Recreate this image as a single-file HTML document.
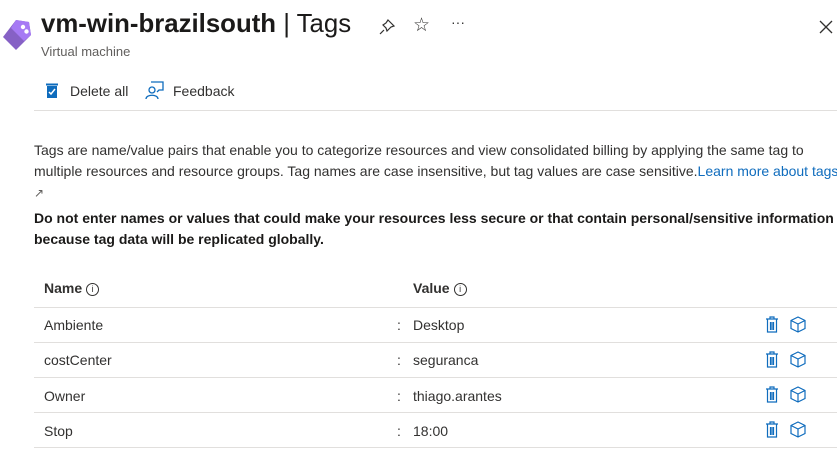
<!DOCTYPE html>
<html><head><style>
body{margin:0;width:837px;height:451px;overflow:hidden;background:#fff;font-family:"Liberation Sans",sans-serif;color:#323130;position:relative}
.a{position:absolute;white-space:nowrap}
.line{position:absolute;left:34px;right:0;height:1px;background:#e1dfdd}
.ic{position:absolute}
.info{font-weight:normal;border:1px solid #323130;border-radius:50%;display:inline-block;width:11px;height:11px;line-height:11px;text-align:center;font-size:9px;margin-left:4px;vertical-align:1px}
</style></head><body>
<svg class="ic" style="left:1px;top:18px" width="32" height="34" viewBox="0 0 32 34"><path d="M15 2 L28 4 L30 17 L15 32 L2 19 Z" fill="#8661c5"/><path d="M15 2 L28 4 L30 17 L23 23 L10 10 Z" fill="#a67af4"/><circle cx="22" cy="9" r="2.2" fill="#fff"/><circle cx="25.5" cy="13.5" r="2.2" fill="#fff"/></svg>
<div class="a" style="left:41px;top:10px;font-size:25.8px;font-weight:bold;color:#1b1a19">vm-win-brazilsouth <span style="font-weight:normal">| Tags</span></div>
<div class="a" style="left:41px;top:44px;font-size:13px;color:#605e5c">Virtual machine</div>
<svg class="ic" style="left:378px;top:18px" width="18" height="18" viewBox="0 0 18 18" fill="none" stroke="#323130" stroke-width="1.2"><path d="M10 2 L16 8 L13 9 L9 13 L8 10 L5 7 L8 5 Z M6 12 L2 16"/></svg>
<div class="a" style="left:413px;top:14px;font-size:19px;color:#323130">☆</div>
<div class="a" style="left:451px;top:14px;font-size:14px;color:#323130">···</div>
<svg class="ic" style="left:819px;top:20px" width="14" height="14" viewBox="0 0 14 14" stroke="#323130" stroke-width="1.3"><path d="M1 1 L13 13 M13 1 L1 13"/></svg>
<svg class="ic" style="left:45px;top:82px" width="14" height="17" viewBox="0 0 14 17"><rect x="2" y="4" width="10" height="12" fill="#0f6cbd"/><rect x="1" y="1.5" width="12" height="2" fill="#0f6cbd"/><path d="M4 10 L6 12 L10 7" stroke="#fff" stroke-width="1.5" fill="none"/></svg>
<div class="a" style="left:70px;top:83px;font-size:14px">Delete all</div>
<svg class="ic" style="left:145px;top:80px" width="20" height="20" viewBox="0 0 20 20" fill="none" stroke="#0f6cbd" stroke-width="1.3"><circle cx="7" cy="10" r="3"/><path d="M1 19 C1 14 13 14 13 19"/><path d="M6 2 H18 V10 H14 L12 12"/></svg>
<div class="a" style="left:173px;top:83px;font-size:14px">Feedback</div>
<div class="line" style="top:110px;left:34px"></div>
<div class="a" style="left:34px;top:140px;font-size:14px;line-height:21px;white-space:normal;width:820px">Tags are name/value pairs that enable you to categorize resources and view consolidated billing by applying the same tag to multiple resources and resource groups. Tag names are case insensitive, but tag values are case sensitive.<span style="color:#0f6cbd">Learn more about tags</span><br><span style="color:#605e5c;font-size:12px">↗</span></div>
<div class="a" style="left:34px;top:208px;font-size:14px;line-height:21px;font-weight:bold;white-space:normal;width:800px;color:#1b1a19">Do not enter names or values that could make your resources less secure or that contain personal/sensitive information because tag data will be replicated globally.</div>
<div class="a" style="left:44px;top:280px;font-size:14px;font-weight:bold">Name<span class="info">i</span></div>
<div class="a" style="left:413px;top:280px;font-size:14px;font-weight:bold">Value<span class="info">i</span></div>
<div class="line" style="top:307px"></div>
<div class="line" style="top:342px"></div>
<div class="line" style="top:377px"></div>
<div class="line" style="top:412px"></div>
<div class="line" style="top:447px"></div>
<div class="a" style="left:44px;top:317px;font-size:14px">Ambiente</div><div class="a" style="left:397px;top:317px;font-size:14px">:</div><div class="a" style="left:413px;top:317px;font-size:14px">Desktop</div>
<div class="a" style="left:44px;top:352px;font-size:14px">costCenter</div><div class="a" style="left:397px;top:352px;font-size:14px">:</div><div class="a" style="left:413px;top:352px;font-size:14px">seguranca</div>
<div class="a" style="left:44px;top:388px;font-size:14px">Owner</div><div class="a" style="left:397px;top:388px;font-size:14px">:</div><div class="a" style="left:413px;top:388px;font-size:14px">thiago.arantes</div>
<div class="a" style="left:44px;top:423px;font-size:14px">Stop</div><div class="a" style="left:397px;top:423px;font-size:14px">:</div><div class="a" style="left:413px;top:423px;font-size:14px">18:00</div>
<svg width="0" height="0" style="position:absolute"><defs>
<g id="tr" fill="none" stroke="#0f6cbd" stroke-width="1.2"><path d="M1 3 H13 M5 3 V1 H9 V3 M2.5 3 V16 H11.5 V3 M5.5 6 V14 M7 6 V14 M8.5 6 V14"/></g>
<g id="cb" fill="none" stroke="#0f6cbd" stroke-width="1.2"><path d="M8 1 L15 4.5 V12.5 L8 16 L1 12.5 V4.5 Z M1 4.5 L8 8 L15 4.5 M8 8 V16"/></g></defs></svg>
<svg class="ic" style="left:765px;top:316px" width="14" height="17"><use href="#tr"/></svg><svg class="ic" style="left:790px;top:316px" width="16" height="17"><use href="#cb"/></svg>
<svg class="ic" style="left:765px;top:351px" width="14" height="17"><use href="#tr"/></svg><svg class="ic" style="left:790px;top:351px" width="16" height="17"><use href="#cb"/></svg>
<svg class="ic" style="left:765px;top:386px" width="14" height="17"><use href="#tr"/></svg><svg class="ic" style="left:790px;top:386px" width="16" height="17"><use href="#cb"/></svg>
<svg class="ic" style="left:765px;top:421px" width="14" height="17"><use href="#tr"/></svg><svg class="ic" style="left:790px;top:421px" width="16" height="17"><use href="#cb"/></svg>
</body></html>
